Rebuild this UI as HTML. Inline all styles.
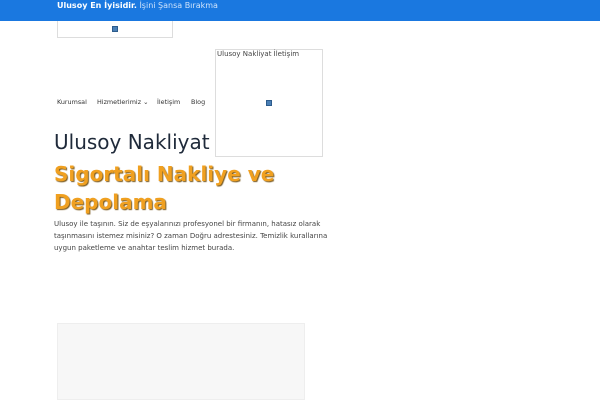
<!DOCTYPE html>
<html><head><meta charset="utf-8"><style>
*{margin:0;padding:0;box-sizing:border-box}
body{width:600px;height:400px;background:#fff;font-family:"DejaVu Sans","Liberation Sans",sans-serif;position:relative;overflow:hidden;color:#333}
.top{position:absolute;left:0;top:0;width:600px;height:21px;background:#1a78e0;color:#fff;font-size:8px;line-height:11px;padding:0 0 0 57px}
.top b{font-weight:bold}
.top span{color:#cfe3fb}
.box1{position:absolute;left:57px;top:21px;width:116px;height:17px;border:1px solid #ddd;border-top:none}
.ic{position:absolute;width:6px;height:6px;background:#4a7fb5;border:1px solid #2d5c8c}
.box2{position:absolute;left:215px;top:49px;width:108px;height:108px;border:1px solid #ddd;font-size:7px;color:#444;padding:0 0 0 1px;line-height:9px}
.nav{position:absolute;left:57px;top:98px;font-size:6.4px;color:#333}
.nav span{position:absolute;top:0;white-space:nowrap}
h1{position:absolute;left:54px;top:130px;font-size:20px;font-weight:normal;color:#1f2a3a;white-space:nowrap}
h2{position:absolute;left:54px;top:160px;font-size:20px;line-height:28px;font-weight:bold;color:#f0a020;text-shadow:1px 1px 1px #7a5a20;width:260px}
p{position:absolute;left:54px;top:218px;font-size:7px;line-height:12px;color:#444;width:285px}
.gray{position:absolute;left:57px;top:323px;width:248px;height:77px;background:#f7f7f7;border:1px solid #eee}
</style></head><body>
<div class="top"><b>Ulusoy En İyisidir.</b> <span>İşini Şansa Bırakma</span></div>
<div class="box1"><div class="ic" style="left:54px;top:5px"></div></div>
<div class="box2">Ulusoy Nakliyat İletişim<div class="ic" style="left:50px;top:50px"></div></div>
<div class="nav"><span style="left:0">Kurumsal</span><span style="left:40px">Hizmetlerimiz ⌄</span><span style="left:100px">İletişim</span><span style="left:134px">Blog</span></div>
<h1>Ulusoy Nakliyat</h1>
<h2>Sigortalı Nakliye ve Depolama</h2>
<p>Ulusoy ile taşının. Siz de eşyalarınızı profesyonel bir firmanın, hatasız olarak taşınmasını istemez misiniz? O zaman Doğru adrestesiniz. Temizlik kurallarına uygun paketleme ve anahtar teslim hizmet burada.</p>
<div class="gray"></div>
</body></html>
